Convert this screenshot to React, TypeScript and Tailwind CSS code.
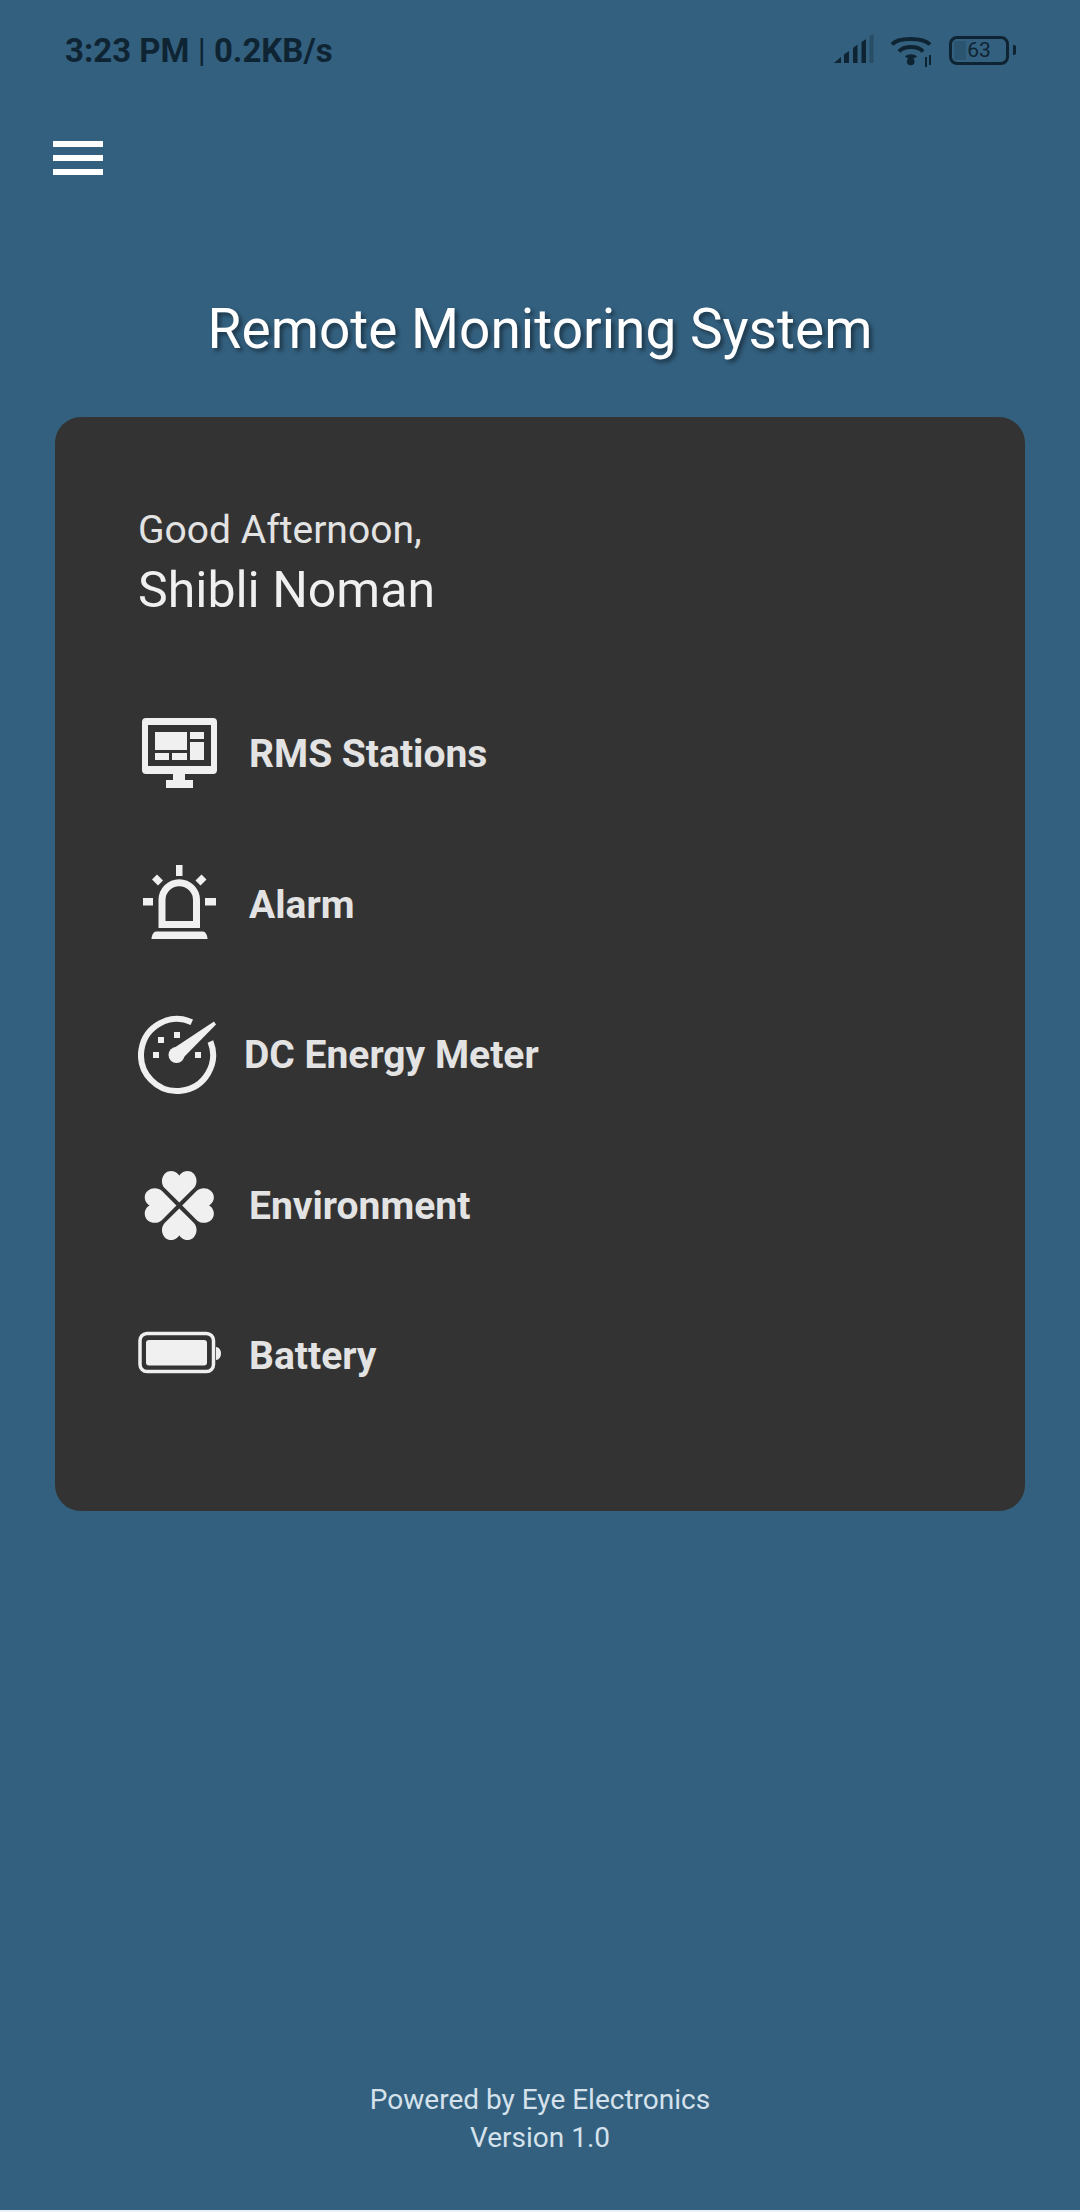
const ink = "#f0f0f0";

function MonitorIcon() {
  return (
    <svg viewBox="0 0 90 90" className="w-[90px] h-[90px] shrink-0" fill={ink}>
      <path fillRule="evenodd" d="M8 9h67a4 4 0 0 1 4 4v48a4 4 0 0 1-4 4H47v6h8v8H28v-8h7v-6H8a4 4 0 0 1-4-4V13a4 4 0 0 1 4-4zM10 16v41h63V16z" />
      <rect x="17" y="23" width="32" height="18" />
      <rect x="52" y="23" width="14" height="7" />
      <rect x="52" y="33" width="14" height="18" />
      <rect x="17" y="44" width="14" height="7" />
      <rect x="34" y="44" width="15" height="7" />
    </svg>
  );
}

function AlarmIcon() {
  return (
    <svg viewBox="0 0 90 90" className="w-[90px] h-[90px] shrink-0" fill={ink}>
      <rect x="38" y="5" width="6.5" height="11" />
      <rect x="5" y="38" width="10" height="7.5" />
      <rect x="67" y="38" width="11" height="7.5" />
      <path d="M16.500 17L22.500 23" stroke={ink} strokeWidth="7" />
      <path d="M66 17L60 23" stroke={ink} strokeWidth="7" />
      <path d="M24 64.500V40A17.250 17.250 0 0 1 58.500 40V64.500Z" fill="none" stroke={ink} strokeWidth="7" />
      <path d="M18 71.500H65C67 71.500 69.500 75 69.500 79H13.500C13.500 75 16 71.500 18 71.500Z" />
    </svg>
  );
}

function GaugeIcon() {
  return (
    <svg viewBox="0 0 90 90" className="w-[90px] h-[90px] shrink-0" fill={ink}>
      <path d="M53.800 12.200A36 36 0 1 0 72.400 31.500" fill="none" stroke={ink} strokeWidth="6" />
      <path d="M76 11.500L78 14.500L46 47L36 38Z" />
      <circle cx="38.500" cy="45" r="8" />
      <rect x="20" y="27" width="6" height="6" />
      <rect x="36" y="22" width="6" height="6" />
      <rect x="15" y="42" width="6" height="6" />
      <rect x="57" y="42" width="6" height="6" />
    </svg>
  );
}

function CloverIcon() {
  const heart = "M0 -3L-15 -18C-21 -24 -17.500 -36 -8.500 -36C-4 -36 -1 -33 0 -31C1 -33 4 -36 8.500 -36C17.500 -36 21 -24 15 -18Z";
  return (
    <svg viewBox="0 0 90 90" className="w-[90px] h-[90px] shrink-0" fill={ink}>
      <g transform="translate(41.300 44.500) scale(0.96)">
        <path d={heart} />
        <path d={heart} transform="rotate(90)" />
        <path d={heart} transform="rotate(180)" />
        <path d={heart} transform="rotate(270)" />
      </g>
    </svg>
  );
}

function BatteryIcon() {
  return (
    <svg viewBox="0 0 90 90" className="w-[90px] h-[90px] shrink-0" fill={ink}>
      <rect x="2" y="22.500" width="73.500" height="38" rx="7" fill="none" stroke={ink} strokeWidth="3.500" />
      <rect x="8" y="29" width="61" height="25.500" rx="3" />
      <path d="M78 36C81 36 83 39 83 42.500C83 46 81 49 78 49Z" />
    </svg>
  );
}

function StatusIcons() {
  return (
    <svg viewBox="0 0 125 60" className="w-[125px] h-[60px]" fill="#0f2433">
      <path d="M14 43L21 37V43Z" />
      <path d="M24 34.500L29 31V43H24Z" />
      <path d="M33 28L37.500 24.500V43H33Z" />
      <path d="M41.500 22L46 19V43H41.500Z" />
      <path d="M49.500 16L53.500 14V43H49.500Z" opacity="0.3" />
      <g fill="none" stroke="#0f2433" strokeWidth="4">
        <path d="M72 24.500C78 17 103 17 110 24.500" />
        <path d="M79 31.500C84 25.500 98 25.500 103 31.500" />
      </g>
      <path d="M85 36.500C88 33.500 94 33.500 97 36.500L94 38.500H88Z" />
      <circle cx="90.700" cy="41.500" r="3.800" />
      <path d="M106 37V47M110 35V45" stroke="#0f2433" strokeWidth="2" />
    </svg>
  );
}

export default function App() {
  const items = [
    { label: "RMS Stations", icon: <MonitorIcon />, gap: "ml-[21px]" },
    { label: "Alarm", icon: <AlarmIcon />, gap: "ml-[21px]" },
    { label: "DC Energy Meter", icon: <GaugeIcon />, gap: "ml-[16px]" },
    { label: "Environment", icon: <CloverIcon />, gap: "ml-[21px]" },
    { label: "Battery", icon: <BatteryIcon />, gap: "ml-[21px]" },
  ];

  return (
    <div className="h-[2212px] w-[1080px] flex flex-col bg-[#33607f] border-b-2 border-[#eaf2f8] font-['Roboto',sans-serif]">
      {/* Status bar */}
      <div className="flex items-center justify-between h-[60px] mt-[21px] pl-[65px] pr-[64px]">
        <span className="text-[33px] font-bold text-[#0f2433]">
          3:23 PM <span className="font-normal">|</span> 0.2KB/s
        </span>
        <div className="flex items-center -translate-y-px">
          <StatusIcons />
          <div className="relative flex items-center justify-center w-[60px] h-[29px] ml-[4px] border-[3.5px] border-[#0f2433] rounded-[8px] bg-[#33607f]">
            <div className="absolute left-[2px] top-[2px] bottom-[2px] w-[12px] bg-[#2a5470]" />
            <span className="relative text-[21px] leading-none text-[#0f2433]">63</span>
          </div>
          <div className="w-[3px] h-[10px] ml-[4px] bg-[#0f2433] rounded-r-[2px]" />
        </div>
      </div>

      {/* Menu */}
      <div className="flex flex-col gap-[8px] w-[50px] ml-[53px] mt-[60px]">
        <div className="h-[6px] bg-white" />
        <div className="h-[6px] bg-white" />
        <div className="h-[6px] bg-white" />
      </div>

      <h1 className="mt-[122px] text-center text-[55px] leading-[64px] text-white [text-shadow:3px_3px_4px_rgba(0,0,0,0.45)]">
        Remote Monitoring System
      </h1>

      {/* Card */}
      <div className="mx-[55px] mt-[56px] h-[1094px] rounded-[26px] bg-[#333333] pl-[83px] pt-[90px]">
        <p className="text-[39px] leading-[46px] text-[#e3e3e3]">Good Afternoon,</p>
        <p className="text-[50px] leading-[60px] mt-[7px] text-[#f0f0f0]">Shibli Noman</p>
        <div className="mt-[59px]">
          {items.map((item) => (
            <div key={item.label} className="flex items-center h-[150.500px]">
              {item.icon}
              <span className={`${item.gap} text-[39px] font-bold text-[#e3e3e3]`}>{item.label}</span>
            </div>
          ))}
        </div>
      </div>

      {/* Footer */}
      <div className="mt-auto mb-[53px] text-center text-[28px] leading-[38px] text-[#d5e2ec]">
        <p>Powered by Eye Electronics</p>
        <p>Version 1.0</p>
      </div>
    </div>
  );
}
